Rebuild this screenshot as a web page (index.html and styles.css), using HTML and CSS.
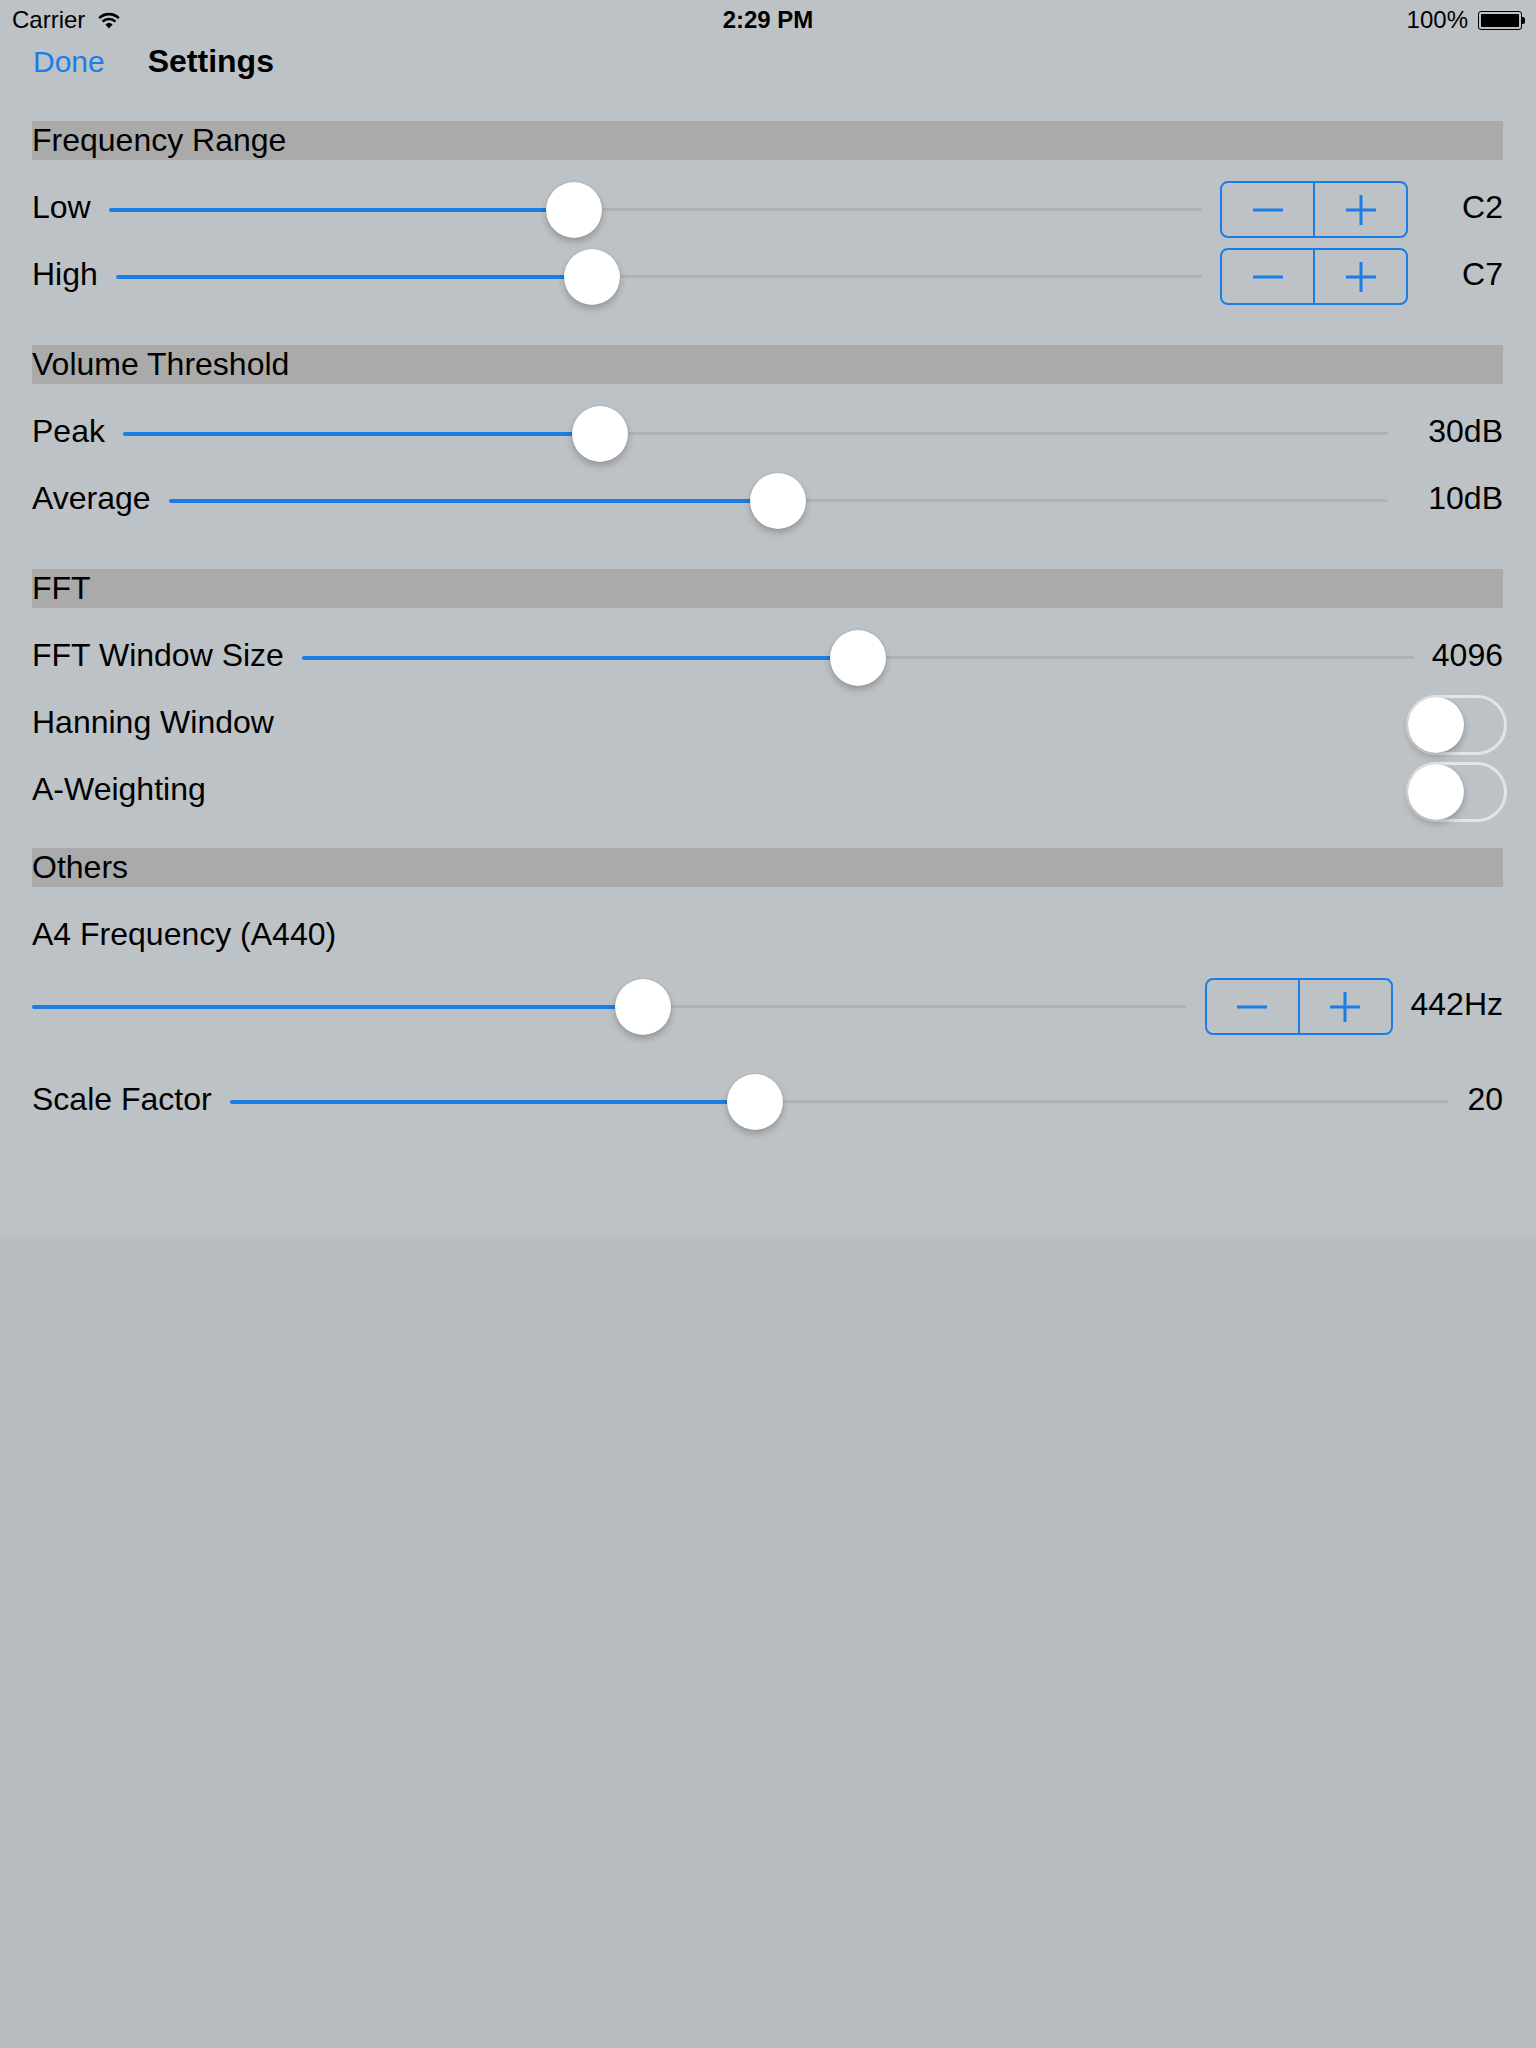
FILE: index.html
```html
<!DOCTYPE html>
<html lang="en">
<head>
    <meta charset="UTF-8">
    <meta name="viewport" content="width=device-width, initial-scale=1.0">
    <title>Settings</title>
    <link rel="stylesheet" href="styles.css">
</head>
<body>
    <div class="screen">
        <div class="status-bar">
            <div class="status-left">
                <span>Carrier</span>
                <svg class="wifi" width="24" height="18" viewBox="0 0 24 18">
                    <path d="M12 17.6 L8.4 13.4 A5.4 5.4 0 0 1 15.6 13.4 Z" fill="#000"/>
                    <path d="M5.6 10.6 A9 9 0 0 1 18.4 10.6" stroke="#000" stroke-width="2.6" fill="none"/>
                    <path d="M2.2 7.2 A13.8 13.8 0 0 1 21.8 7.2" stroke="#000" stroke-width="2.6" fill="none"/>
                </svg>
            </div>
            <div class="status-time">2:29 PM</div>
            <div class="status-right">
                <span>100%</span>
                <div class="battery"><div class="battery-fill"></div></div>
                <div class="battery-nub"></div>
            </div>
        </div>

        <div class="nav">
            <span class="nav-done">Done</span>
            <span class="nav-title">Settings</span>
        </div>

        <div class="content">
            <!-- Frequency Range -->
            <div class="group-title">Frequency Range</div>
            <div class="group">
                <div class="row">
                    <span class="label">Low</span>
                    <div class="slider">
                        <div class="slider-fill" style="width: 42.6%"></div>
                        <div class="slider-knob" style="left: 42.6%"></div>
                    </div>
                    <div class="stepper">
                        <span class="step"><svg width="32" height="32" viewBox="0 0 32 32"><path d="M1 16h30"/></svg></span>
                        <span class="step"><svg width="32" height="32" viewBox="0 0 32 32"><path d="M1 16h30M16 1v30"/></svg></span>
                    </div>
                    <span class="value value-note">C2</span>
                </div>
                <div class="row">
                    <span class="label">High</span>
                    <div class="slider">
                        <div class="slider-fill" style="width: 43.8%"></div>
                        <div class="slider-knob" style="left: 43.8%"></div>
                    </div>
                    <div class="stepper">
                        <span class="step"><svg width="32" height="32" viewBox="0 0 32 32"><path d="M1 16h30"/></svg></span>
                        <span class="step"><svg width="32" height="32" viewBox="0 0 32 32"><path d="M1 16h30M16 1v30"/></svg></span>
                    </div>
                    <span class="value value-note">C7</span>
                </div>
            </div>

            <!-- Volume Threshold -->
            <div class="group-title">Volume Threshold</div>
            <div class="group">
                <div class="row">
                    <span class="label">Peak</span>
                    <div class="slider">
                        <div class="slider-fill" style="width: 37.7%"></div>
                        <div class="slider-knob" style="left: 37.7%"></div>
                    </div>
                    <span class="value value-db">30dB</span>
                </div>
                <div class="row">
                    <span class="label">Average</span>
                    <div class="slider">
                        <div class="slider-fill" style="width: 50%"></div>
                        <div class="slider-knob" style="left: 50%"></div>
                    </div>
                    <span class="value value-db">10dB</span>
                </div>
            </div>

            <!-- FFT -->
            <div class="group-title">FFT</div>
            <div class="group group-tight">
                <div class="row">
                    <span class="label">FFT Window Size</span>
                    <div class="slider">
                        <div class="slider-fill" style="width: 50%"></div>
                        <div class="slider-knob" style="left: 50%"></div>
                    </div>
                    <span class="value">4096</span>
                </div>
                <div class="row">
                    <span class="label">Hanning Window</span>
                    <div class="switch"><div class="switch-knob"></div></div>
                </div>
                <div class="row">
                    <span class="label">A-Weighting</span>
                    <div class="switch"><div class="switch-knob"></div></div>
                </div>
            </div>

            <!-- Others -->
            <div class="group-title">Others</div>
            <div class="group group-last">
                <div class="row">
                    <span class="label">A4 Frequency (A440)</span>
                </div>
                <div class="row row-a4">
                    <div class="slider">
                        <div class="slider-fill" style="width: 52.9%"></div>
                        <div class="slider-knob" style="left: 52.9%"></div>
                    </div>
                    <div class="stepper">
                        <span class="step"><svg width="32" height="32" viewBox="0 0 32 32"><path d="M1 16h30"/></svg></span>
                        <span class="step"><svg width="32" height="32" viewBox="0 0 32 32"><path d="M1 16h30M16 1v30"/></svg></span>
                    </div>
                    <span class="value">442Hz</span>
                </div>
                <div class="row row-scale">
                    <span class="label">Scale Factor</span>
                    <div class="slider">
                        <div class="slider-fill" style="width: 43.1%"></div>
                        <div class="slider-knob" style="left: 43.1%"></div>
                    </div>
                    <span class="value">20</span>
                </div>
            </div>
        </div>
    </div>
</body>
</html>
```

FILE: styles.css
```css
body {
    margin: 0;
    font-family: "Liberation Sans", Arial, sans-serif;
    background-color: #b8bcbf;
    color: #000;
}
.screen {
    background-color: #bdc2c6;
    padding-bottom: 102px;
}

/* status bar */
.status-bar {
    height: 40px;
    display: grid;
    grid-template-columns: 1fr auto 1fr;
    align-items: center;
    font-size: 24px;
    line-height: 40px;
}
.status-left {
    display: flex;
    align-items: center;
    gap: 12px;
    padding-left: 12px;
}
.wifi {
    margin-top: -1px;
}
.status-time {
    font-weight: bold;
}
.status-right {
    display: flex;
    align-items: center;
    justify-content: flex-end;
    padding-right: 11px;
}
.status-right span {
    margin-right: 10px;
}
.battery {
    width: 44px;
    height: 19px;
    border: 1.5px solid #000;
    border-radius: 3px;
    box-sizing: border-box;
    padding: 2px;
}
.battery-fill {
    height: 100%;
    background-color: #000;
    border-radius: 1px;
}
.battery-nub {
    width: 3px;
    height: 7px;
    background-color: #000;
    border-radius: 0 2px 2px 0;
}

/* nav */
.nav {
    height: 81px;
    box-sizing: border-box;
    padding: 1px 0 0 33px;
    display: flex;
    align-items: baseline;
    gap: 43px;
    line-height: 40px;
}
.nav-done {
    font-size: 30px;
    color: #1b7de6;
}
.nav-title {
    font-size: 32px;
    font-weight: bold;
}

/* content */
.content {
    padding: 0 33px 0 32px;
}
.group-title {
    height: 39px;
    line-height: 39px;
    font-size: 32px;
    background-color: #aaaaaa;
}
.group {
    padding: 16px 0 35px;
}
.group-tight {
    padding-bottom: 23px;
}
.group-last {
    padding-bottom: 0;
}
.row {
    height: 67px;
    display: flex;
    align-items: center;
    gap: 18px;
    font-size: 32px;
}
.row-a4 {
    margin-top: 3px;
}
.row-scale {
    margin-top: 28px;
}
.label {
    margin-bottom: 5px;
    white-space: nowrap;
}
.value {
    margin-bottom: 5px;
    text-align: right;
    white-space: nowrap;
}
.value-note {
    min-width: 77px;
}
.value-db {
    min-width: 97px;
}

/* slider */
.slider {
    flex: 1;
    position: relative;
    height: 4px;
    border-radius: 2px;
    background: linear-gradient(#afb2b5, #afb2b5) center / 100% 3px no-repeat;
}
.slider-fill {
    height: 4px;
    border-radius: 2px;
    background-color: #1b7de6;
}
.slider-knob {
    position: absolute;
    top: 50%;
    width: 56px;
    height: 56px;
    margin: -28px 0 0 -28px;
    border-radius: 50%;
    background-color: #fff;
    box-shadow: 0 4px 7px rgba(0,0,0,0.22), 0 0 1px rgba(0,0,0,0.25);
}

/* stepper */
.stepper {
    display: flex;
    width: 188px;
    height: 57px;
    box-sizing: border-box;
    border: 2px solid #1b7de6;
    border-radius: 8px;
}
.step {
    flex: 1;
    display: flex;
    align-items: center;
    justify-content: center;
}
.step + .step {
    border-left: 2px solid #1b7de6;
}
.step svg path {
    stroke: #1b7de6;
    stroke-width: 3;
    fill: none;
}

/* switch */
.switch {
    margin-left: auto;
    margin-right: -4px;
    width: 101px;
    height: 60px;
    box-sizing: border-box;
    border: 3px solid #e3e4e5;
    border-radius: 30px;
    display: flex;
    align-items: center;
}
.switch-knob {
    width: 56px;
    height: 56px;
    margin-left: -1px;
    border-radius: 50%;
    background-color: #fff;
    box-shadow: 0 4px 7px rgba(0,0,0,0.22), 0 0 1px rgba(0,0,0,0.25);
}
```
